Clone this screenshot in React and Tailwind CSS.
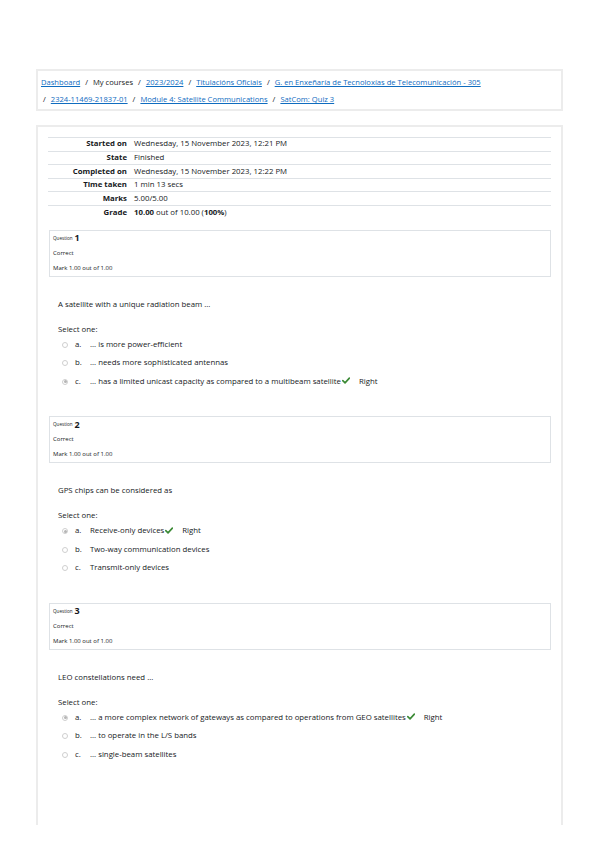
import React from 'react';

const crumbs = [
    { t: 'Dashboard', link: true },
    { t: 'My courses', link: false },
    { t: '2023/2024', link: true },
    { t: 'Titulacións Oficiais', link: true },
    { t: 'G. en Enxeñaría de Tecnoloxías de Telecomunicación - 305', link: true },
];
const crumbs2 = [
    { t: '2324-11469-21837-01', link: true },
    { t: 'Module 4: Satellite Communications', link: true },
    { t: 'SatCom: Quiz 3', link: true },
];

const summary = [
    ['Started on', 'Wednesday, 15 November 2023, 12:21 PM'],
    ['State', 'Finished'],
    ['Completed on', 'Wednesday, 15 November 2023, 12:22 PM'],
    ['Time taken', '1 min 13 secs'],
    ['Marks', '5.00/5.00'],
    ['Grade', null],
];

const questions = [
    {
        n: 1,
        text: 'A satellite with a unique radiation beam ...',
        answer: 2,
        options: [
            '... is more power-efficient',
            '... needs more sophisticated antennas',
            '... has a limited unicast capacity as compared to a multibeam satellite',
        ],
    },
    {
        n: 2,
        text: 'GPS chips can be considered as',
        answer: 0,
        options: ['Receive-only devices', 'Two-way communication devices', 'Transmit-only devices'],
    },
    {
        n: 3,
        text: 'LEO constellations need ...',
        answer: 0,
        options: [
            '... a more complex network of gateways as compared to operations from GEO satellites',
            '... to operate in the L/S bands',
            '... single-beam satellites',
        ],
    },
];

function Crumb({ item }) {
    return item.link ? (
        <span className="text-[#0f6cbf] underline">{item.t}</span>
    ) : (
        <span>{item.t}</span>
    );
}

function Sep() {
    return <span className="mx-[5px]">/</span>;
}

function Check() {
    return (
        <svg className="w-[8px] h-[7px] ml-[1px] mb-[2px]" viewBox="0 0 10 8">
            <path d="M1 4.2 L3.8 7 L9.2 1" fill="none" stroke="#3b8a35" strokeWidth="2" strokeLinecap="round" strokeLinejoin="round" />
        </svg>
    );
}

function Radio({ checked }) {
    return (
        <span className="w-[6px] h-[6px] rounded-full border border-[#cfcfcf] bg-white flex items-center justify-center">
            {checked && <span className="w-[3px] h-[3px] rounded-full bg-[#b5b5b5]" />}
        </span>
    );
}

function Question({ q }) {
    return (
        <div>
            <div className="ml-[1px] h-[47px] border border-[#dee2e6] pl-[3px]">
                <div className="h-[15px] flex items-center gap-[2px]">
                    <span className="text-[4.6px]">Question</span>
                    <span className="text-[9px] font-bold">{q.n}</span>
                </div>
                <div className="h-[15px] flex items-center text-[6px]">Correct</div>
                <div className="h-[15px] flex items-center text-[6px]">Mark 1.00 out of 1.00</div>
            </div>
            <div className="pl-[10px] pb-[25px] text-[7.8px]">
                <div className="mt-[21px] h-[14px] flex items-center">{q.text}</div>
                <div className="mt-[12px] h-[12px] flex items-center">Select one:</div>
                {q.options.map((o, i) => (
                    <div key={i} className="h-[18.5px] flex items-center pl-[4px]">
                        <Radio checked={i === q.answer} />
                        <span className="ml-[7px] w-[15px]">{['a.', 'b.', 'c.'][i]}</span>
                        <span>{o}</span>
                        {i === q.answer && (
                            <>
                                <Check />
                                <span className="ml-[9px]">Right</span>
                            </>
                        )}
                    </div>
                ))}
            </div>
        </div>
    );
}

export default function App() {
    return (
        <div className="w-[599px] h-[848px] bg-white overflow-hidden pt-[69px] px-[36px] text-[#16191c]" style={{ fontFamily: '"Open Sans", "Noto Sans", sans-serif' }}>
            {/* Breadcrumb */}
            <div className="h-[42px] border-2 border-[#ececec] pl-[3px] pt-[3px] text-[7.6px]">
                <div className="h-[17px] flex items-center whitespace-nowrap">
                    {crumbs.map((c, i) => (
                        <React.Fragment key={i}>
                            {i > 0 && <Sep />}
                            <Crumb item={c} />
                        </React.Fragment>
                    ))}
                </div>
                <div className="h-[17px] flex items-center whitespace-nowrap pl-[2px]">
                    <span className="mr-[5px]">/</span>
                    {crumbs2.map((c, i) => (
                        <React.Fragment key={i}>
                            {i > 0 && <Sep />}
                            <Crumb item={c} />
                        </React.Fragment>
                    ))}
                </div>
            </div>

            {/* Main */}
            <div className="mt-[14px] h-[700px] border-2 border-b-0 border-[#ececec] pt-[10px] px-[10px]">
                <div className="border-t border-[#dee2e6]">
                    {summary.map(([k, v], i) => (
                        <div key={k} className={`h-[13.6px] flex items-center text-[7.8px] ${i < summary.length - 1 ? 'border-b border-[#dee2e6]' : ''}`}>
                            <div className="w-[82px] text-right font-bold pr-[3px]">{k}</div>
                            <div className="pl-[4px]">
                                {v !== null ? v : (
                                    <span><b>10.00</b> out of 10.00 (<b>100%</b>)</span>
                                )}
                            </div>
                        </div>
                    ))}
                </div>
                <div className="mt-[10px]">
                    {questions.map((q) => (
                        <Question key={q.n} q={q} />
                    ))}
                </div>
            </div>
        </div>
    );
}
